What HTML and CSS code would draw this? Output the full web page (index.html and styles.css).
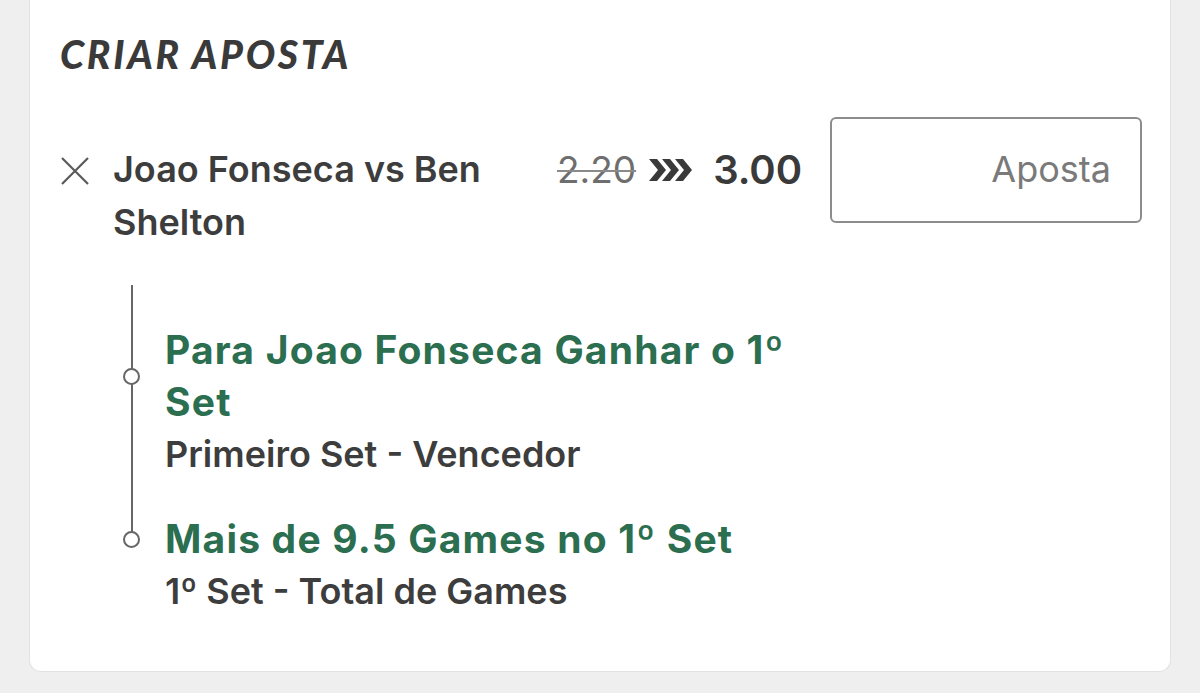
FILE: index.html
```html
<!DOCTYPE html>
<html lang="pt">
<head>
<meta charset="utf-8">
<title>Criar Aposta</title>
<link rel="stylesheet" href="styles.css">
</head>
<body>
<div class="card">
  <h1 class="title">CRIAR APOSTA</h1>
  <div class="bet-row">
    <button class="close" aria-label="Remover">
      <svg width="30" height="30" viewBox="0 0 30 30"><path d="M2 2 L28 28 M28 2 L2 28" stroke="#5a5a5a" stroke-width="2.2" fill="none"/></svg>
    </button>
    <div class="match">Joao Fonseca vs Ben Shelton</div>
    <div class="odds">
      <span class="old">2.20</span>
      <svg class="boost" width="44" height="22" viewBox="0 0 44 22">
        <polygon points="0,0 8,0 17,11 8,22 0,22 9,11" fill="#3a3a3a"/>
        <polygon points="13,0 21,0 30,11 21,22 13,22 22,11" fill="#3a3a3a"/>
        <polygon points="26,0 34,0 43,11 34,22 26,22 35,11" fill="#3a3a3a"/>
      </svg>
      <span class="new">3.00</span>
    </div>
    <div class="stake">Aposta</div>
  </div>
  <div class="legs">
    <div class="leg">
      <div class="leg-title">Para Joao Fonseca Ganhar o 1º Set</div>
      <div class="leg-market">Primeiro Set - Vencedor</div>
    </div>
    <div class="leg">
      <div class="leg-title">Mais de 9.5 Games no 1º Set</div>
      <div class="leg-market">1º Set - Total de Games</div>
    </div>
  </div>
</div>
</body>
</html>
```
FILE: styles.css
```css
html, body {
  margin: 0;
  padding: 0;
  background: #efefef;
}
body {
  padding: 0 29px 0 29px;
  height: 693px;
  overflow: hidden;
}
.card {
  background: #fff;
  border: 1.5px solid #e2e2e2;
  border-top: none;
  border-radius: 0 0 12px 12px;
  padding: 31px 28px 54px 30px;
  font-family: "Inter", "Liberation Sans", sans-serif;
  color: #3d3d3d;
}
.title {
  margin: 0;
  font-family: "Lato", "Liberation Sans", sans-serif;
  font-weight: 900;
  font-style: italic;
  font-size: 39px;
  line-height: 46px;
  letter-spacing: 2.7px;
  color: #3a3a3a;
}
.bet-row {
  margin-top: 40px;
  display: flex;
  align-items: flex-start;
}
.close {
  border: none;
  background: none;
  padding: 0;
  margin: 39px 0 0 0;
  width: 30px;
  height: 30px;
  display: flex;
}
.match {
  margin: 26px 0 0 23px;
  width: 443px;
  font-size: 36px;
  font-weight: 600;
  line-height: 53px;
}
.odds {
  margin: 26px 0 0 1px;
  display: flex;
  align-items: center;
  height: 53px;
}
.old {
  font-size: 37px;
  color: #6e6e6e;
  text-decoration: line-through;
  text-decoration-color: #8a8a8a;
  text-decoration-thickness: 2px;
}
.boost {
  margin: 1px 0 0 13px;
}
.new {
  font-size: 40px;
  font-weight: 600;
  margin-left: 20px;
  color: #3a3a3a;
}
.stake {
  margin-left: auto;
  width: 312px;
  height: 106px;
  box-sizing: border-box;
  border: 2px solid #8c8c8c;
  border-radius: 6px;
  display: flex;
  align-items: center;
  justify-content: flex-end;
  padding: 0 29px 2px 0;
  font-size: 36px;
  color: #7a7a7a;
}
.legs {
  position: relative;
  margin: 36px 0 0 0;
  padding: 39px 0 0 105px;
}
.legs::before {
  content: "";
  position: absolute;
  left: 71px;
  top: 0;
  bottom: 78px;
  width: 2px;
  background: #666;
}
.leg + .leg {
  margin-top: 33px;
}
.leg-title {
  position: relative;
  width: 640px;
  font-size: 39px;
  font-weight: 700;
  line-height: 52px;
  letter-spacing: 1.2px;
  color: #2b6e50;
}
.leg-title::before {
  content: "";
  position: absolute;
  left: -42px;
  top: 50%;
  width: 13px;
  height: 13px;
  margin-top: -8.5px;
  border: 2px solid #666;
  border-radius: 50%;
  background: #fff;
}
.leg-market {
  font-size: 36px;
  font-weight: 600;
  line-height: 52px;
}
```
